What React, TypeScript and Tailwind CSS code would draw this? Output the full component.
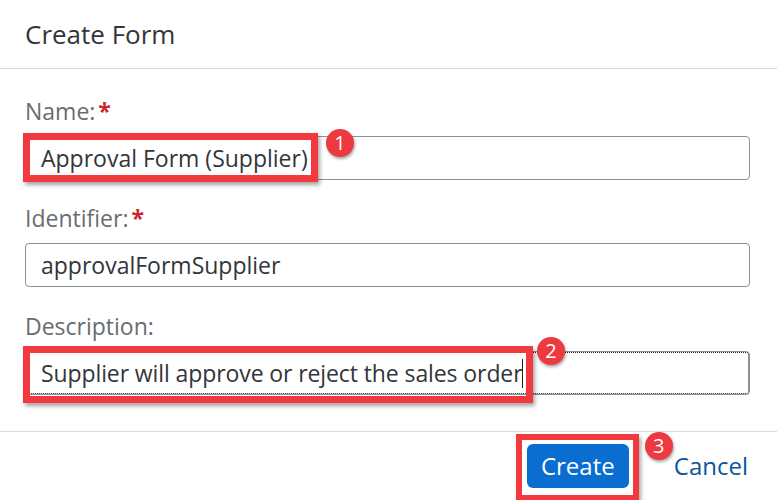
import React from 'react'

const font = { fontFamily: '"Open Sans", "Liberation Sans", sans-serif' }

function Badge({ n, className }: { n: number; className: string }) {
  return (
    <div
      className={`absolute flex h-[28px] w-[28px] items-center justify-center rounded-full bg-[#ec3a40] text-[20px] leading-none text-white shadow-[1px_2px_3px_rgba(0,0,0,0.35)] ${className}`}
    >
      {n}
    </div>
  )
}

function Label({ text, required }: { text: string; required?: boolean }) {
  return (
    <div className="h-[32px] text-[23px] leading-[32px] text-[#6a6d70]">
      {text}
      {required && <span className="ml-[3px] font-bold text-[#d0272e]">*</span>}
    </div>
  )
}

export default function App() {
  return (
    <div className="h-[500px] w-[777px] overflow-hidden bg-white text-[#32363a]" style={font}>
      {/* Header */}
      <div className="flex h-[69px] items-center border-b border-[#d9d9d9] px-[25px]">
        <h1 className="text-[26px] leading-none text-[#32363a]">Create Form</h1>
      </div>

      {/* Body */}
      <div className="pl-[25px] pr-[27px] pt-[26px]">
        <Label text="Name:" required />
        <div className="relative mt-[9px]">
          <div className="flex h-[44px] items-center rounded-[4px] border border-[#89919a] pl-[15px] text-[23px]">
            Approval Form (Supplier)
          </div>
          <div className="absolute left-[-2px] top-[-3px] h-[49px] w-[295px] border-[7px] border-[#f2393f] shadow-[2px_3px_4px_rgba(0,0,0,0.35)]" />
          <Badge n={1} className="left-[301px] top-[-7px]" />
        </div>

        <div className="mt-[22px]">
          <Label text="Identifier:" required />
        </div>
        <div className="mt-[9px] flex h-[44px] items-center rounded-[4px] border border-[#89919a] pl-[15px] text-[23px]">
          approvalFormSupplier
        </div>

        <div className="mt-[23px]">
          <Label text="Description:" />
        </div>
        <div className="relative mt-[9px]">
          <div className="flex h-[44px] items-center rounded-[4px] border border-[#89919a] pl-[15px] text-[23px] outline-1 outline-dotted outline-[#222] -outline-offset-2">
            <span className="tracking-[-0.1px]">Supplier will approve or reject the sales order</span>
            <span className="inline-block h-[29px] w-[1px] bg-[#222]" />
          </div>
          <div className="absolute left-[-2px] top-[-5px] h-[57px] w-[510px] border-[7px] border-[#f2393f] shadow-[2px_3px_4px_rgba(0,0,0,0.35)]" />
          <Badge n={2} className="left-[512px] top-[-14px]" />
        </div>
      </div>

      {/* Footer */}
      <div className="mt-[36px] flex h-[69px] items-center justify-end gap-[45px] border-t border-[#d9d9d9] pr-[29px]">
        <div className="relative">
          <button className="flex h-[44px] w-[102px] items-center justify-center rounded-[6px] bg-[#0a6ed1] text-[24px] font-medium text-white">
            Create
          </button>
          <div className="absolute left-[-11px] top-[-10px] h-[67px] w-[123px] border-[6px] border-[#f2393f] shadow-[2px_3px_4px_rgba(0,0,0,0.35)]" />
          <Badge n={3} className="left-[118px] top-[-12px]" />
        </div>
        <span className="text-[24px] text-[#0b559e]">Cancel</span>
      </div>
    </div>
  )
}
